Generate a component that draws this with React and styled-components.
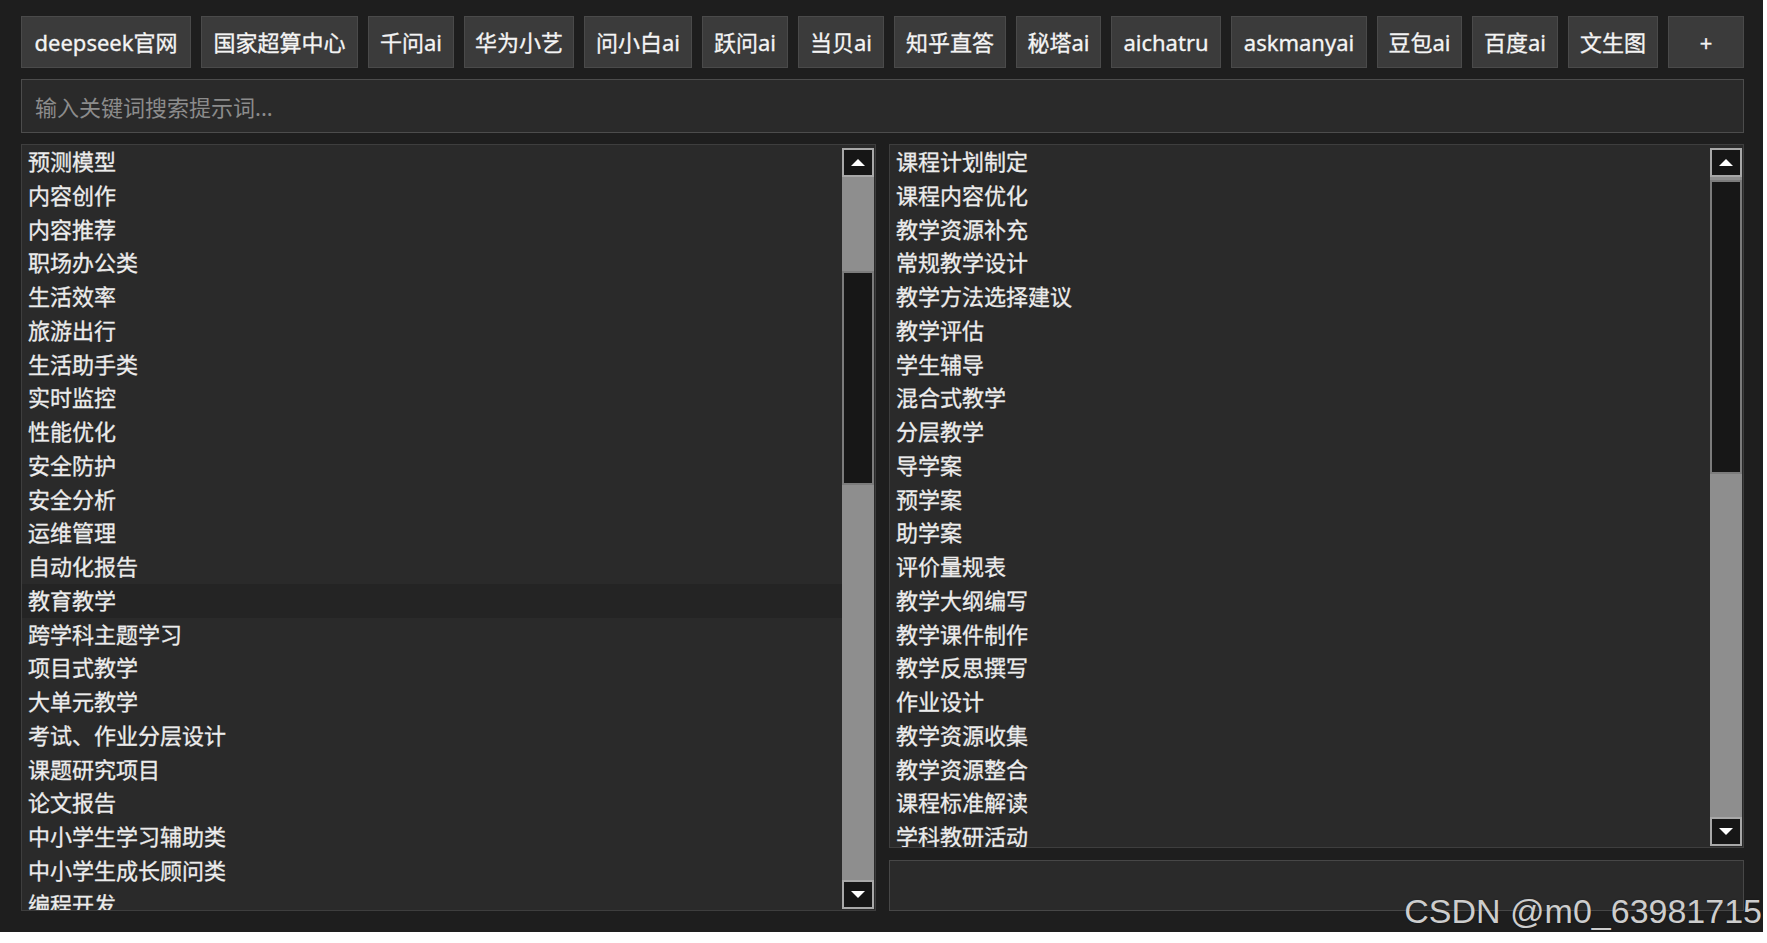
import React from 'react';
import styled, { createGlobalStyle } from 'styled-components';

const GlobalStyle = createGlobalStyle`
  html, body { margin: 0; padding: 0; background: #ffffff; }
  body { font-family: "Noto Sans", "Noto Sans CJK SC", sans-serif; }
  * { box-sizing: border-box; }
`;

const Screen = styled.div`
  position: relative;
  width: 1767px;
  height: 943px;
  background: #ffffff;
  overflow: hidden;
`;

const Window = styled.div`
  width: 1763px;
  height: 932px;
  background: #1e1e1e;
  padding: 16px 19px 21px 21px;
  display: flex;
  flex-direction: column;
  gap: 11px;
`;

const Toolbar = styled.div`
  display: flex;
  gap: 10px;
  height: 52px;
`;

const SiteButton = styled.button`
  width: ${(p) => p.$w}px;
  height: 52px;
  flex: none;
  padding: 0;
  background: #3b3b3b;
  border: 1px solid #4a4a4a;
  color: #f4f4f4;
  font-family: "Noto Sans", "Noto Sans CJK SC", sans-serif;
  font-size: 22px;
  line-height: 50px;
  text-align: center;
  white-space: nowrap;
  -webkit-text-stroke: 0.3px #f4f4f4;
`;

const SearchBox = styled.div`
  height: 54px;
  background: #2a2a2a;
  border: 1px solid #4c4c4c;
  padding-left: 13px;
  display: flex;
  align-items: center;
  color: #8c8c8c;
  font-size: 22px;
`;

const Panels = styled.div`
  flex: 1;
  display: grid;
  grid-template-columns: 1fr 1fr;
  gap: 13px;
  min-height: 0;
`;

const Column = styled.div`
  display: flex;
  flex-direction: column;
  gap: 12px;
  min-height: 0;
`;

const ListBox = styled.div`
  flex: 1;
  min-height: 0;
  display: flex;
  background: #2a2a2a;
  border: 1px solid #3e3e3e;
  overflow: hidden;
`;

const Items = styled.div`
  flex: 1;
  min-width: 0;
  overflow: hidden;
`;

const Item = styled.div`
  height: 33.75px;
  line-height: 33.75px;
  padding-left: 6px;
  font-size: 22px;
  color: #ececec;
  -webkit-text-stroke: 0.3px #ececec;
  background: ${(p) => (p.$active ? '#242424' : 'transparent')};
  white-space: nowrap;
`;

const Scrollbar = styled.div`
  width: 33px;
  flex: none;
  display: flex;
  flex-direction: column;
  padding: 3px 1px 1px 0;
`;

const ArrowButton = styled.div`
  height: 29px;
  flex: none;
  background: #161616;
  border: 2px solid #a8a8a8;
  display: flex;
  align-items: center;
  justify-content: center;
`;

const Track = styled.div`
  position: relative;
  flex: 1;
  background: #8e8e8e;
`;

const Thumb = styled.div`
  position: absolute;
  left: 0;
  right: 0;
  background: #171717;
  border: 2px solid #7c7c7c;
`;

const OutputBox = styled.div`
  height: 51px;
  flex: none;
  background: #2a2a2a;
  border: 1px solid #474747;
`;

const Watermark = styled.div`
  position: absolute;
  right: 5px;
  top: 894px;
  font-family: "Liberation Sans", Arial, sans-serif;
  font-size: 34px;
  line-height: 34px;
  color: #cdcdcd;
  text-shadow: 0 0 2px rgba(0, 0, 0, 0.35);
  white-space: nowrap;
`;

const sites = [
  ['deepseek官网', 170],
  ['国家超算中心', 157],
  ['千问ai', 86],
  ['华为小艺', 110],
  ['问小白ai', 108],
  ['跃问ai', 86],
  ['当贝ai', 86],
  ['知乎直答', 112],
  ['秘塔ai', 85],
  ['aichatru', 110],
  ['askmanyai', 136],
  ['豆包ai', 85],
  ['百度ai', 86],
  ['文生图', 90],
  ['+', 76],
];

const categories = [
  '预测模型', '内容创作', '内容推荐', '职场办公类', '生活效率', '旅游出行',
  '生活助手类', '实时监控', '性能优化', '安全防护', '安全分析', '运维管理',
  '自动化报告', '教育教学', '跨学科主题学习', '项目式教学', '大单元教学',
  '考试、作业分层设计', '课题研究项目', '论文报告', '中小学生学习辅助类',
  '中小学生成长顾问类', '编程开发',
];

const prompts = [
  '课程计划制定', '课程内容优化', '教学资源补充', '常规教学设计', '教学方法选择建议',
  '教学评估', '学生辅导', '混合式教学', '分层教学', '导学案', '预学案', '助学案',
  '评价量规表', '教学大纲编写', '教学课件制作', '教学反思撰写', '作业设计',
  '教学资源收集', '教学资源整合', '课程标准解读', '学科教研活动',
];

const Arrow = ({ down }) => (
  <svg width="16" height="9" viewBox="0 0 16 9">
    {down ? <polygon points="1,1 15,1 8,8" fill="#ffffff" /> : <polygon points="8,1 15,8 1,8" fill="#ffffff" />}
  </svg>
);

const ScrollBarView = ({ top, height }) => (
  <Scrollbar>
    <ArrowButton><Arrow /></ArrowButton>
    <Track>
      <Thumb style={{ top: `${top}px`, height: `${height}px` }} />
    </Track>
    <ArrowButton><Arrow down /></ArrowButton>
  </Scrollbar>
);

export default function App() {
  return (
    <>
      <GlobalStyle />
      <Screen>
        <Window>
          <Toolbar>
            {sites.map(([name, w]) => (
              <SiteButton key={name} $w={w}>{name}</SiteButton>
            ))}
          </Toolbar>
          <SearchBox>输入关键词搜索提示词...</SearchBox>
          <Panels>
            <ListBox>
              <Items>
                {categories.map((c) => (
                  <Item key={c} $active={c === '教育教学'}>{c}</Item>
                ))}
              </Items>
              <ScrollBarView top={94} height={214} />
            </ListBox>
            <Column>
              <ListBox>
                <Items>
                  {prompts.map((p) => (
                    <Item key={p}>{p}</Item>
                  ))}
                </Items>
                <ScrollBarView top={3} height={294} />
              </ListBox>
              <OutputBox />
            </Column>
          </Panels>
        </Window>
        <Watermark>CSDN @m0_63981715</Watermark>
      </Screen>
    </>
  );
}
